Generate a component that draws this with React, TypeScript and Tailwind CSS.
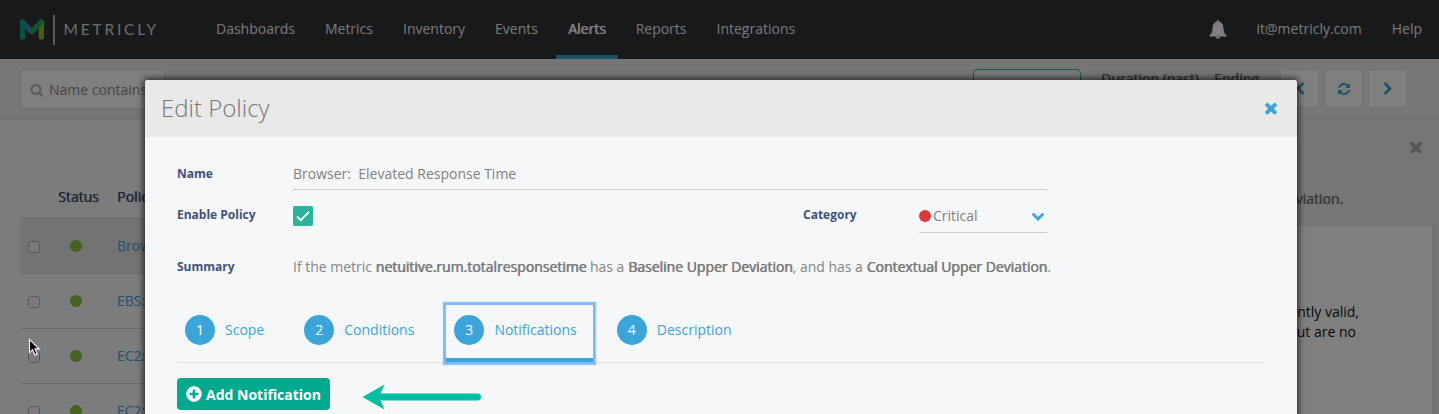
import React from "react";

const TIMES =
  "M1490 1322q0 40-28 68l-136 136q-28 28-68 28t-68-28l-294-294-294 294q-28 28-68 28t-68-28l-136-136q-28-28-28-68t28-68l294-294-294-294q-28-28-28-68t28-68l136-136q28-28 68-28t68 28l294 294 294-294q28-28 68-28t68 28l136 136q28 28 28 68t-28 68l-294 294 294 294q28 28 28 68z";
const REFRESH =
  "M1639 1056q0 5-1 7-64 268-268 434.5t-478 166.5q-146 0-282.5-55t-243.5-157l-129 129q-19 19-45 19t-45-19-19-45v-448q0-26 19-45t45-19h448q26 0 45 19t19 45-19 45l-137 137q71 66 161 102t187 36q134 0 250-65t186-179q11-17 53-117 8-23 30-23h192q13 0 22.5 9.5t9.5 22.5zm25-800v448q0 26-19 45t-45 19h-448q-26 0-45-19t-19-45 19-45l138-138q-148-137-349-137-134 0-250 65t-186 179q-11 17-53 117-8 23-30 23h-199q-13 0-22.5-9.5t-9.5-22.5v-7q65-268 270-434.5t480-166.5q146 0 284 55.5t245 156.5l130-129q19-19 45-19t45 19 19 45z";
const CHEVRON_LEFT =
  "M1427 301l-531 531 531 531q19 19 19 45t-19 45l-166 166q-19 19-45 19t-45-19l-742-742q-19-19-19-45t19-45l742-742q19-19 45-19t45 19l166 166q19 19 19 45t-19 45z";
const CHEVRON_RIGHT =
  "M1363 877l-742 742q-19 19-45 19t-45-19l-166-166q-19-19-19-45t19-45l531-531-531-531q-19-19-19-45t19-45l166-166q19-19 45-19t45 19l742 742q19 19 19 45t-19 45z";
const SEARCH =
  "M1216 832q0-185-131.5-316.5t-316.5-131.5-316.5 131.5-131.5 316.5 131.5 316.5 316.5 131.5 316.5-131.5 131.5-316.5zm512 832q0 52-38 90t-90 38q-54 0-90-38l-343-342q-179 124-399 124-143 0-273.5-55.5t-225-150-150-225-55.500-273.500 55.500-273.500 150-225 225-150 273.500-55.500 273.500 55.500 225 150 150 225 55.500 273.500q0 220-124 399l343 343q37 37 37 90z";
const PLUS_CIRCLE =
  "M1344 960v-128q0-26-19-45t-45-19h-256v-256q0-26-19-45t-45-19h-128q-26 0-45 19t-19 45v256h-256q-26 0-45 19t-19 45v128q0 26 19 45t45 19h256v256q0 26 19 45t45 19h128q26 0 45-19t19-45v-256h256q26 0 45-19t19-45zm320-64q0 209-103 385.5t-279.5 279.5-385.5 103-385.5-103-279.5-279.5-103-385.5 103-385.5 279.5-279.5 385.5-103 385.5 103 279.5 279.5 103 385.5z";

function Glyph({ d, className }: { d: string; className: string }) {
  return (
    <svg viewBox="0 0 1792 1792" fill="currentColor" className={className}>
      <path d={d} />
    </svg>
  );
}

function Logo() {
  return (
    <div className="flex h-[59px] w-[196px] shrink-0 items-center pl-5">
      <svg viewBox="0 0 24 21" className="h-[21px] w-6 shrink-0" fill="none" strokeLinecap="round">
        <path d="M21.4 3V18" stroke="#8fbf3f" strokeWidth="5.200" />
        <path d="M2.6 3L11 12" stroke="#3d8ecb" strokeWidth="5.200" />
        <path d="M2.6 3V18" stroke="#13a386" strokeWidth="5.200" />
        <path d="M12 12.300L21.2 3" stroke="#22ad55" strokeWidth="5.400" />
      </svg>
      <div className="ml-[9px] h-[30px] w-[1.5px] bg-[#b4b4b4]" />
      <span className="-mt-px ml-[9px] font-['Lato',sans-serif] text-[15.5px] leading-5 tracking-[2.8px] text-[#dddddd]">METRICLY</span>
    </div>
  );
}

const NAV = ["Dashboards", "Metrics", "Inventory", "Events", "Alerts", "Reports", "Integrations"];

function TopNav() {
  return (
    <header className="flex h-[59px] bg-[#2e3234] text-[14px] text-[#f0f0f0]">
      <Logo />
      <nav className="ml-2 flex gap-[6px]">
        {NAV.map((n) => (
          <a
            key={n}
            className={
              n === "Alerts"
                ? "flex h-[59px] items-center border-b-4 border-b-[#3ba5d9] px-3 pt-[2px] text-white [text-shadow:0.7px_0_0_currentColor]"
                : "flex h-[59px] items-center px-3 pb-[2px]"
            }
          >
            {n}
          </a>
        ))}
      </nav>
      <div className="ml-auto flex items-center pr-[17px] pb-[2px]">
        <svg viewBox="0 0 18 19" className="mt-[2px] h-[19px] w-[18px] text-white" fill="currentColor">
          <path d="M9 0.3c.8 0 1.3.5 1.3 1.2v.3c2.600.6 4 2.700 4.100 5.500.1 4.300.9 6.200 3 8.200.4.5.1 1-.5 1H1.100c-.6 0-.9-.5-.5-1 2.100-2 2.900-3.900 3-8.200.1-2.800 1.500-4.900 4.100-5.500v-.3c0-.7.5-1.200 1.300-1.200z" />
          <path d="M6.600 16.700h4.800c-.2 1.300-1.200 2-2.400 2s-2.200-.7-2.400-2z" />
        </svg>
        <span className="ml-[30px]">it@metricly.com</span>
        <span className="ml-[30px]">Help</span>
      </div>
    </header>
  );
}

function Toolbar() {
  return (
    <div className="flex h-[61px] items-start border-b border-[#dcdcdc] bg-[#ececec] pt-[10px]">
      <div className="ml-5 flex h-10 w-[145px] items-center rounded-[3px] border border-[#dadada] bg-white pl-[9px]">
        <Glyph d={SEARCH} className="mt-px h-[14px] w-[14px] shrink-0 text-[#b4b4b4]" />
        <span className="ml-[5px] whitespace-nowrap text-[14px] text-[#8c8c8c]">Name contains</span>
      </div>
      <div className="ml-auto h-10 w-[108px] rounded-[4px] border border-[#2bb39b] bg-[#f4f4f4]" />
      <span className="ml-5 w-[98px] whitespace-nowrap text-[14px] leading-[19px] text-[#666666] [text-shadow:0.6px_0_0_currentColor]">Duration (past)</span>
      <span className="ml-[15px] w-[47px] text-[14px] leading-[19px] text-[#666666] [text-shadow:0.6px_0_0_currentColor]">Ending</span>
      <div className="mr-8 ml-[19px] flex gap-[5px] text-[#3ba5d9]">
        {[CHEVRON_LEFT, REFRESH, CHEVRON_RIGHT].map((d, i) => (
          <div key={i} className="flex h-[39px] w-[39px] items-center justify-center rounded-[2px] border border-[#e2e2e2] bg-white">
            <Glyph d={d} className="h-[14px] w-[14px]" />
          </div>
        ))}
      </div>
    </div>
  );
}

const ROWS = ["Browser: Elevated Response Time", "EBS: Elevated Latency", "EC2: CPU Threshold", "EC2: Elevated Network"];

function PolicyTable() {
  return (
    <section className="w-[720px] shrink-0 bg-[#f7f8fa] pl-5">
      <div className="flex h-[98px] items-end pb-[11px] text-[14px] leading-5 text-[#3c4c74] [text-shadow:0.6px_0_0_currentColor]">
        <span className="ml-[38px] w-[59px]">Status</span>
        <span>Policy</span>
      </div>
      {ROWS.map((r, i) => (
        <div
          key={i}
          className={
            i === 0
              ? "flex h-[55px] items-center border-t border-[#d5d5d5] bg-[#e6e6e6]"
              : "flex h-[55px] items-center border-t border-[#d5d5d5]"
          }
        >
          <div className="mt-px ml-2 h-3 w-3 rounded-[3px] border border-[#b2b2b2] bg-[#f6f6f6]" />
          <div className="ml-[30px] h-3 w-3 rounded-full bg-[#8bc53f]" />
          <span className="mb-px ml-[35px] text-[14px] text-[#3ba5d9]">{r}</span>
        </div>
      ))}
    </section>
  );
}

function DetailPanel() {
  return (
    <section className="flex grow flex-col bg-[#ececec]">
      <div className="flex justify-end pt-[18px] pr-[14px] text-[#aaaaaa]">
        <Glyph d={TIMES} className="h-[18px] w-[18px]" />
      </div>
      <p className="mt-[33px] mr-[96px] text-right text-[14px] leading-5 text-[#777777] [text-shadow:0.6px_0_0_currentColor]">Deviation.</p>
      <div className="mt-[17px] mr-[7px] h-[300px] rounded-[2px] bg-white pt-[76px] pl-[439px] text-[14px] leading-5 text-[#111111] shadow">
        <div className="flex w-[200px] justify-end whitespace-nowrap">currently valid,</div>
        <div className="flex w-[197px] justify-end whitespace-nowrap">but are no</div>
      </div>
    </section>
  );
}

function Label({ children, className }: { children: React.ReactNode; className: string }) {
  return <span className={`text-[12px] font-bold leading-4 text-[#3f5379] ${className}`}>{children}</span>;
}

function Strong({ children }: { children: React.ReactNode }) {
  return <span className="text-[#7a7a7a] [text-shadow:0.7px_0_0_currentColor]">{children}</span>;
}

const STEPS = ["Scope", "Conditions", "Notifications", "Description"];

function Steps() {
  return (
    <div className="mr-8 flex h-[59px] gap-4 border-b border-[#dcdee0]">
      {STEPS.map((label, i) => (
        <div
          key={label}
          className={
            i === 2
              ? "mt-px flex h-[57px] shrink-0 items-center border-b-4 border-[#3ba5d9] pr-4 pb-[4px] pl-2 shadow-[0_0_0_2px_#80b7f7,0_0_1px_3px_#93c1f9]"
              : "flex h-[51px] shrink-0 items-center pr-4 pl-2"
          }
        >
          <span className="flex h-[30px] w-[30px] items-center justify-center rounded-full bg-[#3ba5d9] text-[14px] text-white">{i + 1}</span>
          <span className="ml-[10px] text-[14px] text-[#3ba5d9]">{label}</span>
        </div>
      ))}
    </div>
  );
}

function PolicyDialog() {
  return (
    <div className="absolute top-20 left-[145px] h-[400px] w-[1152px] overflow-hidden rounded-t-[3px] bg-[#f5f7f9] shadow-[0_0_7px_1px_rgba(0,0,0,0.8)]">
      <div className="flex h-[57px] items-center justify-between bg-[#e9e9e9] pr-[17px] pb-[2px] pl-4">
        <h1 className="text-[24px] font-light leading-8 text-[#777777]">Edit Policy</h1>
        <Glyph d={TIMES} className="h-[18px] w-[18px] text-[#3ba5d9]" />
      </div>
      <div className="pl-8">
        <div className="flex h-[53px] items-end">
          <Label className="mb-2 w-[116px]">Name</Label>
          <div className="h-[31px] w-[754px] border-b border-[#cacccd] text-[14px] leading-[29px] whitespace-pre text-[#808080]">Browser:  Elevated Response Time</div>
        </div>
        <div className="flex h-[43px] items-start">
          <Label className="mt-[17px] w-[116px]">Enable Policy</Label>
          <div className="mt-4 flex h-5 w-5 items-center justify-center rounded-[2px] bg-[#2bb39b]">
            <svg viewBox="0 0 14 12" className="h-3 w-[14px]" fill="none" stroke="white" strokeWidth="1.8">
              <path d="M1 6.500L4.800 10.200L13 1.800" />
            </svg>
          </div>
          <Label className="mt-[17px] ml-[490px] w-[116px]">Category</Label>
          <div className="flex h-[43px] w-32 items-center border-b border-[#cacccd] pt-[10px]">
            <span className="h-3 w-3 rounded-full bg-[#db3837]" />
            <span className="mb-[2px] ml-[2px] text-[14px] text-[#808080]">Critical</span>
            <svg viewBox="0 0 14 10" className="mt-px mr-[2px] ml-auto h-[10px] w-[14px]" fill="none" stroke="#3ba5d9" strokeWidth="3" strokeLinecap="round">
              <path d="M2.500 2.500L7 7L11.500 2.500" />
            </svg>
          </div>
        </div>
        <div className="mt-6 flex h-5 items-center">
          <Label className="w-[116px]">Summary</Label>
          <p className="text-[14px] leading-5 tracking-[-0.01px] whitespace-nowrap text-[#858585]">
            If the metric <Strong>netuitive.rum.totalresponsetime</Strong> has a <Strong>Baseline Upper Deviation</Strong>, and has a{" "}
            <Strong>Contextual Upper Deviation</Strong>.
          </p>
        </div>
        <div className="mt-[27px]">
          <Steps />
        </div>
        <div className="mt-[14px] flex items-center">
          <button className="flex h-8 w-[153px] items-center rounded-[4px] bg-[#03a98f] pl-2 text-[14px] font-bold whitespace-nowrap text-white">
            <Glyph d={PLUS_CIRCLE} className="h-[18px] w-[18px] shrink-0" />
            <span className="ml-[3px]">Add Notification</span>
          </button>
          <svg viewBox="0 0 120 28" className="mt-[6px] ml-[32px] h-7 w-[120px]">
            <path d="M20 14H115.500" stroke="#00bea4" strokeWidth="7" strokeLinecap="round" />
            <path d="M0.500 14L22.500 1.500L17 14L22.500 26.500Z" fill="#00bea4" />
          </svg>
        </div>
      </div>
    </div>
  );
}

export default function App() {
  return (
    <div className="relative h-[414px] w-[1439px] overflow-hidden font-['Open_Sans','Noto_Sans',sans-serif]">
      <TopNav />
      <Toolbar />
      <div className="flex">
        <PolicyTable />
        <DetailPanel />
      </div>
      <div className="absolute inset-0 bg-black/50" />
      <PolicyDialog />
      <svg viewBox="0 0 13 19" className="absolute top-[338px] left-[28px] h-[19px] w-[13px]">
        <path d="M1.500 1.500V14.500L4.600 11.700L7 17L9.300 16L7 10.900H11.200Z" fill="#000000" stroke="#ffffff" strokeWidth="1.100" />
      </svg>
    </div>
  );
}
